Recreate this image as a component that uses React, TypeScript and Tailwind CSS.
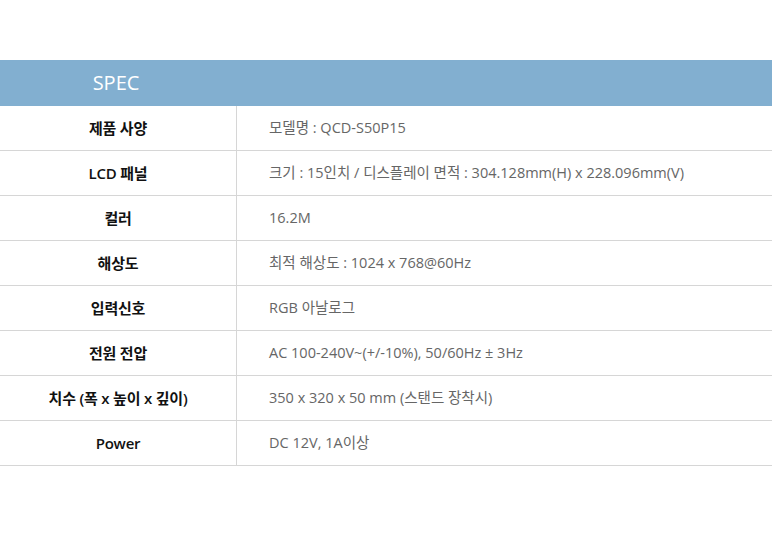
const rows: [string, string][] = [
  ["제품 사양", "모델명 : QCD-S50P15"],
  ["LCD 패널", "크기 : 15인치 / 디스플레이 면적 : 304.128mm(H) x 228.096mm(V)"],
  ["컬러", "16.2M"],
  ["해상도", "최적 해상도 : 1024 x 768@60Hz"],
  ["입력신호", "RGB 아날로그"],
  ["전원 전압", "AC 100-240V~(+/-10%), 50/60Hz ± 3Hz"],
  ["치수 (폭 x 높이 x 깊이)", "350 x 320 x 50 mm (스탠드 장착시)"],
  ["Power", "DC 12V, 1A이상"],
];

export default function App() {
  return (
    <div
      className="w-[772px] h-[536px] bg-white pt-[60px]"
      style={{ fontFamily: '"Open Sans", "Noto Sans CJK KR", sans-serif' }}
    >
      {/* header */}
      <div className="flex h-[46px] items-center bg-[#82afd0]">
        <div className="w-[232px] text-center text-[20px] text-white">SPEC</div>
      </div>

      {rows.map(([label, value]) => (
        <div key={label} className="flex h-[45px] border-b border-[#d6d6d6]">
          <div className="flex w-[237px] items-center justify-center border-r border-[#d6d6d6] text-[15px] font-semibold tracking-[-0.2px] text-[#111]">
            {label}
          </div>
          <div className="flex flex-1 items-center pl-[32px] text-[14.5px] text-[#666]">
            {value}
          </div>
        </div>
      ))}
    </div>
  );
}
